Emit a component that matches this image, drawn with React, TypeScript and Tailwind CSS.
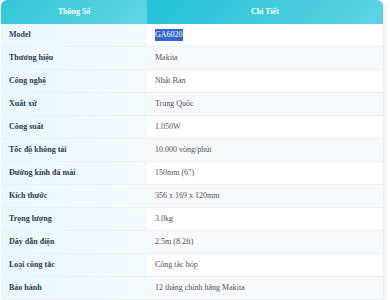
const specs: [string, string][] = [
  ['Model', 'GA6020'],
  ['Thương hiệu', 'Makita'],
  ['Công nghệ', 'Nhật Bản'],
  ['Xuất xứ', 'Trung Quốc'],
  ['Công suất', '1.050W'],
  ['Tốc độ không tải', '10.000 vòng/phút'],
  ['Đường kính đá mài', '150mm (6")'],
  ['Kích thước', '356 x 169 x 120mm'],
  ['Trọng lượng', '3.0kg'],
  ['Dây dẫn điện', '2.5m (8.2ft)'],
  ['Loại công tắc', 'Công tắc bóp'],
  ['Bảo hành', '12 tháng chính hãng Makita'],
];

export default function App() {
  return (
    <div className="bg-white pl-[1px] font-['Liberation_Serif',serif] text-[8px]">
      <div className="w-[382px] rounded-t-[6px] overflow-hidden shadow-[2px_2px_4px_rgba(0,0,0,0.08)]">
        <div className="flex h-[24px] text-white font-bold">
          <div className="w-[146px] flex items-center justify-center bg-[linear-gradient(135deg,#34c6da,#62d4e3)]">
            Thông Số
          </div>
          <div className="flex-1 flex items-center justify-center bg-[linear-gradient(135deg,#22c2d7,#60d3e3)]">
            Chi Tiết
          </div>
        </div>
        {specs.map(([label, value], i) => (
          <div
            key={label}
            className={`flex h-[23px] border-b border-[#eef1f4] ${i % 2 === 0 ? 'bg-white' : 'bg-[#f8f9fb]'}`}
          >
            <div className="w-[146px] flex items-center pl-[8px] font-bold text-[#2c3e50] bg-[linear-gradient(90deg,#eaf7fd,#f4fbfe)]">
              {label}
            </div>
            <div className="flex-1 flex items-center pl-[8px] text-[#555]">
              {i === 0 ? (
                <span className="bg-[#3266d5] text-white">{value}</span>
              ) : (
                value
              )}
            </div>
          </div>
        ))}
      </div>
    </div>
  );
}
